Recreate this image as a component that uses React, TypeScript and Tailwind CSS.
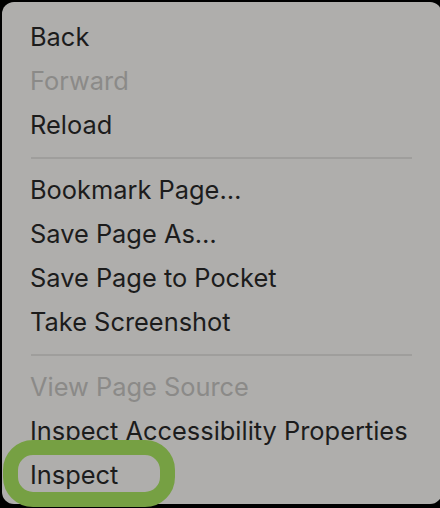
const groups: { label: string; disabled?: boolean }[][] = [
  [{ label: 'Back' }, { label: 'Forward', disabled: true }, { label: 'Reload' }],
  [
    { label: 'Bookmark Page…' },
    { label: 'Save Page As…' },
    { label: 'Save Page to Pocket' },
    { label: 'Take Screenshot' },
  ],
  [
    { label: 'View Page Source', disabled: true },
    { label: 'Inspect Accessibility Properties' },
    { label: 'Inspect' },
  ],
];

function Item({ label, disabled }: { label: string; disabled?: boolean }) {
  const text = (
    <span className={disabled ? 'text-[#8b8a88]' : 'text-[#1c1c1c]'}>{label}</span>
  );
  if (label === 'Inspect') {
    return (
      <div className="h-[44px] flex items-center relative">
        <div className="absolute left-[-27px] top-[-13px] w-[172px] h-[67px] rounded-[30px] border-[15px] border-[#76a043]" />
        {text}
      </div>
    );
  }
  return <div className="h-[44px] flex items-center">{text}</div>;
}

export default function App() {
  return (
    <div className="w-[440px] h-[508px] bg-black pt-[2px] pl-[2px] overflow-hidden">
      <div
        className="w-[440px] h-[502px] bg-[#afaeac] rounded-[12px] pt-[13px] pl-[28px] pr-[30px] text-[25.4px] leading-none"
        style={{ fontFamily: 'Inter, "Noto Sans", sans-serif' }}
      >
        {groups.map((g, i) => (
          <div key={i}>
            {i > 0 && (
              <div className="h-[21px] flex items-center pl-[1px]">
                <div className="h-[2px] w-full bg-[#9f9e9c]" />
              </div>
            )}
            {g.map((it) => (
              <Item key={it.label} {...it} />
            ))}
          </div>
        ))}
      </div>
    </div>
  );
}
